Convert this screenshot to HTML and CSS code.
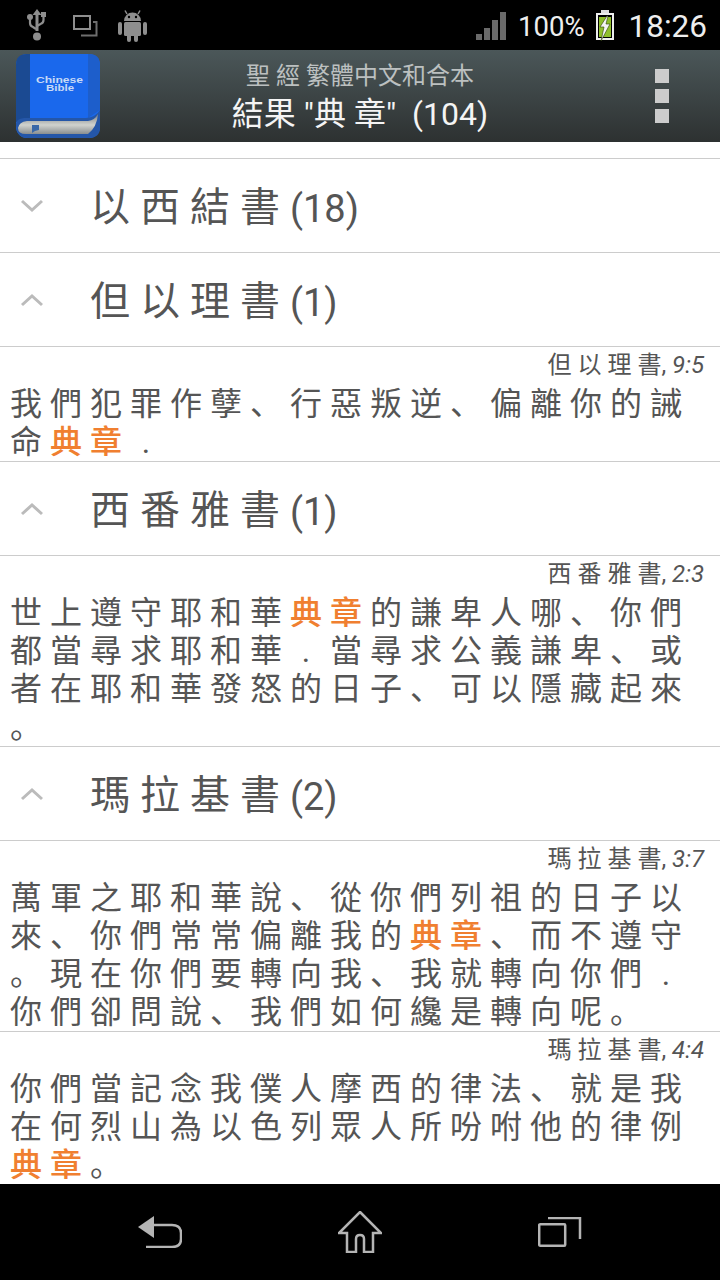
FILE: index.html
```html
<!DOCTYPE html>
<html>
<head>
<meta charset="utf-8">
<title>聖經</title>
<link rel="stylesheet" href="styles.css">
</head>
<body>
<div class="phone">
    <div class="status">
        <svg class="ic-usb" width="20" height="32" viewBox="0 0 20 32">
            <path d="M10 0l4.500 6h-3v16h-3V6h-3z" fill="#8e8e8e"/>
            <path d="M3 8v6q0 3 3 4l3 2M16.500 6v5q0 3-3 4l-3.500 2" fill="none" stroke="#8e8e8e" stroke-width="2.200"/>
            <circle cx="3" cy="8" r="3" fill="#8e8e8e"/>
            <rect x="14" y="3" width="5" height="5" fill="#8e8e8e"/>
            <circle cx="10" cy="27.500" r="4" fill="#8e8e8e"/>
        </svg>
        <svg class="ic-win" width="25" height="22" viewBox="0 0 25 22">
            <rect x="1" y="1" width="16" height="13" fill="none" stroke="#8e8e8e" stroke-width="2"/>
            <path d="M8 20.500h15.500V7H20" fill="none" stroke="#6e6e6e" stroke-width="2"/>
        </svg>
        <svg class="ic-droid" width="29" height="32" viewBox="0 0 29 32">
            <path d="M6 11a8.500 8.500 0 0 1 17 0z" fill="#8e8e8e"/>
            <path d="M9 4L7 0.500M20 4l2-3.500" stroke="#8e8e8e" stroke-width="1.500"/>
            <rect x="6" y="12" width="17" height="14" rx="1.500" fill="#8e8e8e"/>
            <rect x="0" y="12" width="4" height="13" rx="2" fill="#8e8e8e"/>
            <rect x="25" y="12" width="4" height="13" rx="2" fill="#8e8e8e"/>
            <rect x="9" y="24" width="4" height="8" rx="2" fill="#8e8e8e"/>
            <rect x="16" y="24" width="4" height="8" rx="2" fill="#8e8e8e"/>
            <circle cx="11" cy="7" r="1.200" fill="#000"/>
            <circle cx="18" cy="7" r="1.200" fill="#000"/>
        </svg>
        <div class="spring"></div>
        <svg class="ic-signal" width="30" height="28" viewBox="0 0 30 28">
            <rect x="0" y="22" width="6" height="6" fill="#6a6a6a"/>
            <rect x="8" y="16" width="6" height="12" fill="#6a6a6a"/>
            <rect x="16" y="8" width="6" height="20" fill="#6a6a6a"/>
            <rect x="24" y="0" width="6" height="28" fill="#6a6a6a"/>
        </svg>
        <span class="pct">100%</span>
        <svg class="ic-batt" width="18" height="32" viewBox="0 0 18 32">
            <rect x="5" y="0" width="8" height="3" fill="#ddd"/>
            <rect x="1" y="4" width="16" height="25" fill="#000" stroke="#eee" stroke-width="2"/>
            <rect x="3" y="7" width="12" height="20" fill="#8fbe2c"/>
            <path d="M11 6L4 17h4L5 31l9-17h-4l2-8z" fill="#f4f4f4" stroke="#2c3c08" stroke-width="0.600"/>
        </svg>
        <span class="clock">18:26</span>
    </div>

    <div class="actionbar">
        <svg class="logo" width="84" height="84" viewBox="0 0 84 84">
            <defs>
                <linearGradient id="pages" x1="0" y1="0" x2="0" y2="1">
                    <stop offset="0" stop-color="#7c8084"/>
                    <stop offset="0.55" stop-color="#d0d2ce"/>
                    <stop offset="1" stop-color="#8a8e90"/>
                </linearGradient>
            </defs>
            <rect x="0" y="0" width="84" height="84" rx="11" fill="#1a68ec"/>
            <path d="M11 0Q0 0 0 11V68L14 66V0z" fill="#1b4a92"/>
            <path d="M72 0h1q11 0 11 11V56L72 64z" fill="#1d5ecb"/>
            <path d="M0 70q0-5 8-6H70q10-1 14-8V74q0 10-12 10H12Q0 84 0 70z" fill="#2456a8"/>
            <path d="M2 74q1-6 9-7H72q7-1 10-7-1 13-10 20H10q-8 0-8-6z" fill="url(#pages)"/>
            <path d="M16 71h7v5l-4 1-3 2z" fill="#3a68a8"/>
            <text class="logo-txt" x="20" y="29" textLength="47" lengthAdjust="spacingAndGlyphs">Chinese</text>
            <text class="logo-txt" x="30" y="37" textLength="28" lengthAdjust="spacingAndGlyphs">Bible</text>
        </svg>
        <div class="titles">
            <div class="sub">聖 經 繁體中文和合本</div>
            <div class="main">結果 "典 章"&nbsp; (104)</div>
        </div>
        <div class="menu">
            <div></div>
            <div></div>
            <div></div>
        </div>
    </div>

    <div class="list">
        <div class="book">
            <svg class="chev" width="24" height="14" viewBox="0 0 24 14"><path d="M2 2l10 9 10-9" /></svg>
            <span class="bname">以西結書</span><span class="bcount">(18)</span>
        </div>
        <div class="book">
            <svg class="chev" width="24" height="14" viewBox="0 0 24 14"><path d="M2 12l10-9 10 9" /></svg>
            <span class="bname">但以理書</span><span class="bcount">(1)</span>
        </div>
        <div class="verse">
            <div class="ref">但 以 理 書, <i>9:5</i></div>
            <div class="txt">我們犯罪作孽、行惡叛逆、偏離你的誡<br>命<b>典章</b><span class="dot">.</span></div>
        </div>
        <div class="book">
            <svg class="chev" width="24" height="14" viewBox="0 0 24 14"><path d="M2 12l10-9 10 9" /></svg>
            <span class="bname">西番雅書</span><span class="bcount">(1)</span>
        </div>
        <div class="verse">
            <div class="ref">西 番 雅 書, <i>2:3</i></div>
            <div class="txt">世上遵守耶和華<b>典章</b>的謙卑人哪、你們<br>都當尋求耶和華<span class="dot">.</span>當尋求公義謙卑、或<br>者在耶和華發怒的日子、可以隱藏起來<br>。</div>
        </div>
        <div class="book">
            <svg class="chev" width="24" height="14" viewBox="0 0 24 14"><path d="M2 12l10-9 10 9" /></svg>
            <span class="bname">瑪拉基書</span><span class="bcount">(2)</span>
        </div>
        <div class="verse">
            <div class="ref">瑪 拉 基 書, <i>3:7</i></div>
            <div class="txt">萬軍之耶和華說、從你們列祖的日子以<br>來、你們常常偏離我的<b>典章</b>、而不遵守<br>。現在你們要轉向我、我就轉向你們<span class="dot">.</span><br>你們卻問說、我們如何纔是轉向呢。</div>
        </div>
        <div class="verse">
            <div class="ref">瑪 拉 基 書, <i>4:4</i></div>
            <div class="txt">你們當記念我僕人摩西的律法、就是我<br>在何烈山為以色列眾人所吩咐他的律例<br><b>典章</b>。</div>
        </div>
    </div>

    <div class="nav">
        <svg width="44" height="32" viewBox="0 0 44 32">
            <path d="M0 11L16 0v22z" fill="#b4b4b4"/>
            <path d="M14 9h20q9 0 9 8v6q0 8-9 8H8" fill="none" stroke="#b4b4b4" stroke-width="2.500"/>
        </svg>
        <svg width="44" height="42" viewBox="0 0 44 42">
            <path d="M22 1L43 22H35V41H26V28q0-4-4-4t-4 4V41H9V22H1z" fill="none" stroke="#b4b4b4" stroke-width="2.500"/>
        </svg>
        <svg width="44" height="30" viewBox="0 0 44 30">
            <rect x="1.200" y="7.200" width="26" height="21.500" fill="none" stroke="#b4b4b4" stroke-width="2.500" rx="1"/>
            <path d="M10 1h32v21" fill="none" stroke="#b4b4b4" stroke-width="2.500"/>
        </svg>
    </div>
</div>
</body>
</html>
```
FILE: styles.css
```css
*{
    margin: 0;
    padding: 0;
    box-sizing: border-box;
}
body{
    width: 720px;
    height: 1280px;
    overflow: hidden;
    font-family: Roboto, "Noto Sans CJK SC", sans-serif;
    background-color: #fff;
}
.phone{
    display: flex;
    flex-direction: column;
    width: 720px;
    height: 1280px;
}

/* status bar */
.status{
    display: flex;
    align-items: flex-start;
    flex: 0 0 50px;
    min-height: 0;
    padding-left: 27px;
    background-color: #000;
    color: #eee;
}
.spring{
    flex: 1;
}
.ic-usb{
    margin: 9px 26px 0 0;
}
.ic-win{
    margin: 15px 20px 0 0;
}
.ic-droid{
    margin: 10px 0 0 0;
}
.ic-signal{
    margin: 12px 12px 0 0;
}
.pct{
    font-size: 27.500px;
    line-height: 53px;
    margin-right: 11px;
}
.ic-batt{
    margin: 10px 15px 0 0;
}
.clock{
    font-size: 31.500px;
    line-height: 53px;
    margin-right: 13px;
}

/* action bar */
.actionbar{
    display: flex;
    align-items: center;
    flex: 0 0 92px;
    padding: 0 51px 0 16px;
    background: linear-gradient(#4b5759, #2d3131);
}
.logo{
    flex: none;
}
.logo-txt{
    font-family: "Liberation Sans", sans-serif;
    font-size: 8.500px;
    font-weight: bold;
    fill: #c8daf6;
}
.titles{
    flex: 1;
    text-align: center;
    padding-right: 35px;
}
.sub{
    font-size: 24px;
    line-height: 36px;
    color: #bcc0c0;
}
.main{
    font-size: 32px;
    line-height: 40px;
    color: #f4f4f4;
}
.menu{
    flex: none;
}
.menu div{
    width: 14px;
    height: 14px;
    margin: 6px 0;
    background-color: #ccc;
}

/* result list */
.list{
    flex: 1;
    min-height: 0;
    overflow: hidden;
    padding-top: 16px;
    color: #555;
}
.book{
    display: flex;
    align-items: center;
    height: 94px;
    padding: 0 0 0 20px;
    border-bottom: 1px solid #ccc;
}
.book:first-child{
    height: 95px;
    border-top: 1px solid #ccc;
}
.chev{
    flex: none;
    margin-right: 46px;
}
.chev path{
    fill: none;
    stroke: #bbb;
    stroke-width: 3;
}
.bname{
    font-size: 40px;
    line-height: 50px;
    padding-top: 4px;
    letter-spacing: 10px;
}
.bcount{
    font-size: 38px;
    line-height: 50px;
    padding-top: 6px;
}
.verse{
    border-bottom: 1px solid #ccc;
}
.ref{
    height: 38px;
    padding-right: 16px;
    font-size: 24px;
    line-height: 37px;
    text-align: right;
}
.txt{
    padding-left: 10px;
    font-size: 32px;
    line-height: 38px;
    letter-spacing: 8px;
    white-space: nowrap;
}
.txt b{
    font-weight: 500;
    color: #f07f30;
}
.dot{
    display: inline-block;
    width: 40px;
    padding-right: 8px;
    letter-spacing: 0;
    text-align: center;
}

/* nav buttons */
.nav{
    display: flex;
    justify-content: center;
    align-items: center;
    gap: 156px;
    flex: 0 0 96px;
    background-color: #000;
}
```
